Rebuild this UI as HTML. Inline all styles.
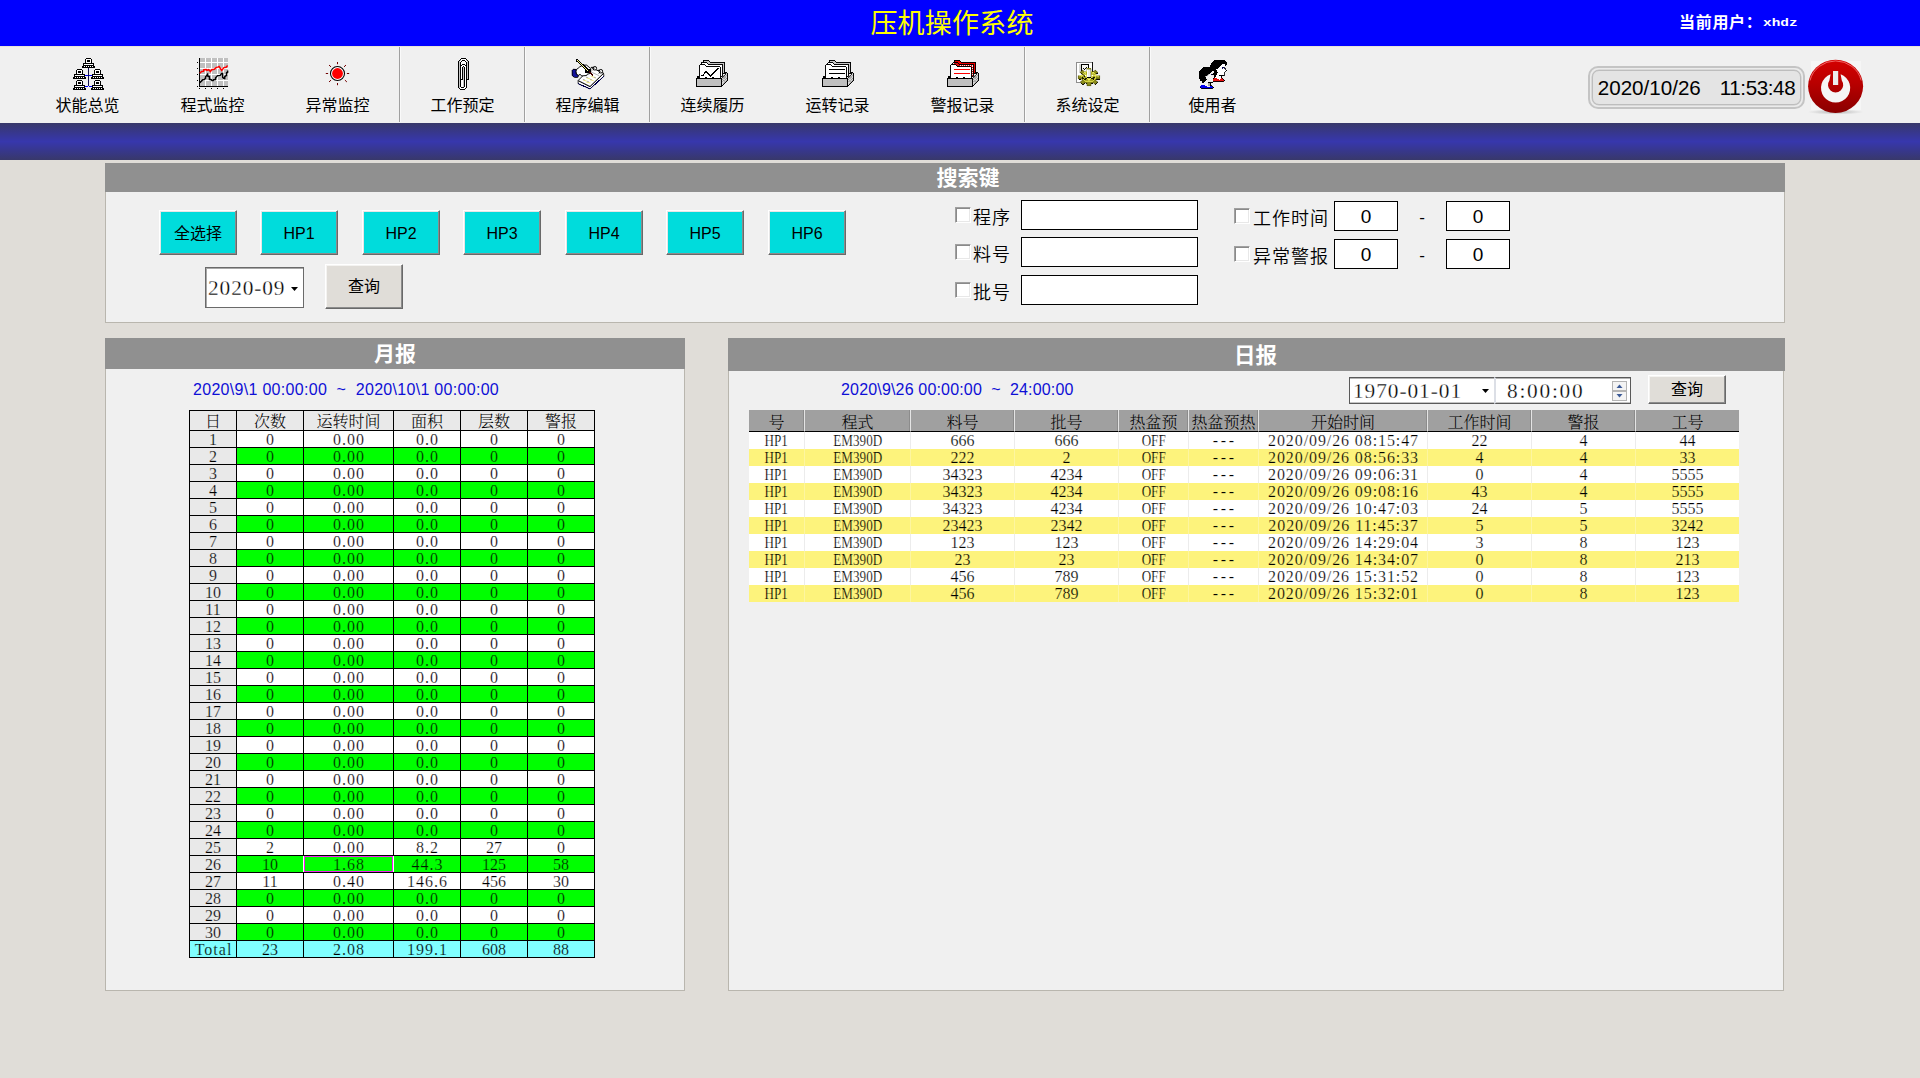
<!DOCTYPE html>
<html lang="zh-CN"><head><meta charset="utf-8"><title>压机操作系统</title>
<style>
*{box-sizing:border-box;margin:0;padding:0}
html,body{width:1920px;height:1078px;overflow:hidden}
body{position:relative;background:#e0ddd8;color:#000;font-family:"Liberation Sans","Noto Sans CJK SC",sans-serif;font-size:16px;line-height:1}
.a{position:absolute}
.song{font-family:"Liberation Serif","Noto Serif CJK SC",serif}
#titlebar{left:0;top:0;width:1920px;height:46px;background:#0000ff}
#apptitle{left:761px;top:5px;letter-spacing:.2px;width:382px;height:38px;line-height:39px;text-align:center;color:#ffff00;font-size:27px;white-space:nowrap}
#curuser{left:1679px;top:14px;height:20px;line-height:20px;color:#fff;font-weight:bold;font-size:16px;letter-spacing:.7px;white-space:nowrap;font-family:"Liberation Mono","Noto Sans CJK SC",monospace}
#toolbar{left:0;top:46px;width:1920px;height:77px;background:#f0f0f0;border-top:1px solid #e6e4dc}
.tb{top:0;width:125px;height:76px}
.tb svg{position:absolute;left:42px;top:7px;width:40px;height:40px}
.tb span{position:absolute;left:0;top:49px;width:125px;height:20px;line-height:20px;text-align:center;font-size:16px;white-space:nowrap}
.sep{top:0;width:2px;height:75px;border-left:1px solid #a0a0a0;border-right:1px solid #fafafa}
#band{left:0;top:123px;width:1920px;height:37px;background:linear-gradient(to bottom,#38386a 0%,#373790 28%,#3737ad 50%,#373790 72%,#38386a 100%)}
.panel{background:#f0f0f0;border:1px solid #b9b6ae}
.phead{left:0;top:0;background:#909090;color:#fff;font-weight:bold;text-align:center;white-space:nowrap}

.hp{top:46px;width:78px;height:45px;background:#00dcdc;border:1px solid;border-color:#fff #696969 #696969 #fff;box-shadow:inset -1px -1px 0 #8c8c8c,inset 1px 1px 0 #e6e6e6;text-align:center;line-height:45px;font-size:16px}
.btn{background:#e0ddd8;border:1px solid;border-color:#fff #696969 #696969 #fff;box-shadow:inset -1px -1px 0 #8c8c8c,inset 1px 1px 0 #f4f3f1;text-align:center;font-size:16px}
.cb{width:16px;height:16px;background:#fff;border:1px solid;border-color:#a0a0a0 #fff #fff #a0a0a0;box-shadow:inset 1px 1px 0 #8a8a8a,inset -1px -1px 0 #e8e8e8}
.lbl{font-size:18px;font-weight:350;letter-spacing:1px;height:22px;line-height:24px;white-space:nowrap}
.inp{background:#fff;border:1px solid #000;height:30px;text-align:center;font-size:19px;line-height:30px}

.dt{color:#0e0ed6;font-size:16px;letter-spacing:.3px;white-space:pre;height:20px;line-height:20px}
#mt{border-collapse:separate;border-spacing:1px;background:#000;table-layout:fixed;font-size:16px}
#mt td,#mt th{height:16px;line-height:15px;padding:1px 0 0;text-align:center;font-weight:normal;background:#fff;white-space:nowrap;overflow:hidden}
#mt th{height:19px;line-height:17px;padding-top:2px;background:#e9e9e9;font-weight:300}
#mt td.rh{background:#e9e9e9}
#mt tr.g td{background:#00ff00;color:#001c00}
#mt tr.g td.rh{background:#e9e9e9;color:#000}
#mt tr.t td{background:#80ffff}
#mt td.d{letter-spacing:1px;text-indent:1px}
#mt td{-webkit-text-stroke:.22px #fff}
#mt td.rh{-webkit-text-stroke-color:#e9e9e9}
#mt tr.g td{-webkit-text-stroke-color:#00ff00}
#mt tr.g td.rh{-webkit-text-stroke-color:#e9e9e9}
#mt tr.t td{-webkit-text-stroke-color:#80ffff}
#mt td.sel{box-shadow:-1px 0 0 #fff,1px 0 0 #fff,inset 0 0 0 1px #f020f0}

#dtb{border-collapse:separate;border-spacing:0;table-layout:fixed;font-size:16px;background:#fff}
#dtb td,#dtb th{height:17px;line-height:17px;padding:0;text-align:center;font-weight:normal;white-space:nowrap;overflow:hidden;border-right:1px solid #ececec}
#dtb th{height:21px;line-height:17px;padding-top:4px;font-weight:300;background:#a0a0a0;border-right:1px solid #e4e4e4;border-bottom:1px solid #000;box-shadow:inset -1px 0 0 #8c8c8c}
#dtb tr.y td{background:#fdf37c;border-right-color:#fdf5a0}
#dtb .c{display:inline-block;transform:scaleX(.82)}
#dtb .k{letter-spacing:2.7px;text-indent:2.7px}
#dtb .ts{letter-spacing:.9px;text-indent:1px;white-space:pre}
#dtb td{-webkit-text-stroke:.22px #fff}
#dtb tr.y td{-webkit-text-stroke-color:#fdf37c}
#dtb td:last-child,#dtb th:last-child{border-right:none;box-shadow:none}
</style></head><body>
<div id="titlebar" class="a"><div id="apptitle" class="a">压机操作系统</div><div id="curuser" class="a">当前用户：<span style="display:inline-block;font-size:10.6px;letter-spacing:0;transform:scaleX(1.36);transform-origin:0 50%;position:relative;top:-2px;margin-left:0">xhdz</span></div></div>
<div id="toolbar" class="a">
<div class="a tb" style="left:25px"><svg viewBox="0 0 40 40" shape-rendering="crispEdges"><path fill="#000" d="M19 4h5v1h-5zM18 5h1v1h-1zM24 5h1v1h-1zM18 6h1v1h-1zM20 6h3v1h-3zM24 6h1v1h-1zM18 7h1v1h-1zM20 7h3v1h-3zM24 7h1v1h-1zM18 8h1v1h-1zM24 8h1v1h-1zM16 9h11v1h-11zM16 10h1v1h-1zM26 10h1v1h-1zM16 11h11v1h-11zM15 12h2v1h-2zM18 12h1v1h-1zM20 12h1v1h-1zM22 12h1v1h-1zM24 12h1v1h-1zM26 12h2v1h-2zM15 13h13v1h-13z"/><path fill="#fff" d="M19 5h5v1h-5zM19 6h1v1h-1zM23 6h1v1h-1zM19 7h1v1h-1zM23 7h1v1h-1zM19 8h5v1h-5zM17 10h9v1h-9zM17 12h1v1h-1zM19 12h1v1h-1zM21 12h1v1h-1zM23 12h1v1h-1zM25 12h1v1h-1z"/><path fill="#000" d="M10 15h5v1h-5zM9 16h1v1h-1zM15 16h1v1h-1zM9 17h1v1h-1zM11 17h3v1h-3zM15 17h1v1h-1zM9 18h1v1h-1zM11 18h3v1h-3zM15 18h1v1h-1zM9 19h1v1h-1zM15 19h1v1h-1zM7 20h11v1h-11zM7 21h1v1h-1zM17 21h1v1h-1zM7 22h11v1h-11zM6 23h2v1h-2zM9 23h1v1h-1zM11 23h1v1h-1zM13 23h1v1h-1zM15 23h1v1h-1zM17 23h2v1h-2zM6 24h13v1h-13z"/><path fill="#fff" d="M10 16h5v1h-5zM10 17h1v1h-1zM14 17h1v1h-1zM10 18h1v1h-1zM14 18h1v1h-1zM10 19h5v1h-5zM8 21h9v1h-9zM8 23h1v1h-1zM10 23h1v1h-1zM12 23h1v1h-1zM14 23h1v1h-1zM16 23h1v1h-1z"/><path fill="#000" d="M28 15h5v1h-5zM27 16h1v1h-1zM33 16h1v1h-1zM27 17h1v1h-1zM29 17h3v1h-3zM33 17h1v1h-1zM27 18h1v1h-1zM29 18h3v1h-3zM33 18h1v1h-1zM27 19h1v1h-1zM33 19h1v1h-1zM25 20h11v1h-11zM25 21h1v1h-1zM35 21h1v1h-1zM25 22h11v1h-11zM24 23h2v1h-2zM27 23h1v1h-1zM29 23h1v1h-1zM31 23h1v1h-1zM33 23h1v1h-1zM35 23h2v1h-2zM24 24h13v1h-13z"/><path fill="#fff" d="M28 16h5v1h-5zM28 17h1v1h-1zM32 17h1v1h-1zM28 18h1v1h-1zM32 18h1v1h-1zM28 19h5v1h-5zM26 21h9v1h-9zM26 23h1v1h-1zM28 23h1v1h-1zM30 23h1v1h-1zM32 23h1v1h-1zM34 23h1v1h-1z"/><path fill="#000" d="M10 26h5v1h-5zM9 27h1v1h-1zM15 27h1v1h-1zM9 28h1v1h-1zM11 28h3v1h-3zM15 28h1v1h-1zM9 29h1v1h-1zM11 29h3v1h-3zM15 29h1v1h-1zM9 30h1v1h-1zM15 30h1v1h-1zM7 31h11v1h-11zM7 32h1v1h-1zM17 32h1v1h-1zM7 33h11v1h-11zM6 34h2v1h-2zM9 34h1v1h-1zM11 34h1v1h-1zM13 34h1v1h-1zM15 34h1v1h-1zM17 34h2v1h-2zM6 35h13v1h-13z"/><path fill="#fff" d="M10 27h5v1h-5zM10 28h1v1h-1zM14 28h1v1h-1zM10 29h1v1h-1zM14 29h1v1h-1zM10 30h5v1h-5zM8 32h9v1h-9zM8 34h1v1h-1zM10 34h1v1h-1zM12 34h1v1h-1zM14 34h1v1h-1zM16 34h1v1h-1z"/><path fill="#000" d="M28 26h5v1h-5zM27 27h1v1h-1zM33 27h1v1h-1zM27 28h1v1h-1zM29 28h3v1h-3zM33 28h1v1h-1zM27 29h1v1h-1zM29 29h3v1h-3zM33 29h1v1h-1zM27 30h1v1h-1zM33 30h1v1h-1zM25 31h11v1h-11zM25 32h1v1h-1zM35 32h1v1h-1zM25 33h11v1h-11zM24 34h2v1h-2zM27 34h1v1h-1zM29 34h1v1h-1zM31 34h1v1h-1zM33 34h1v1h-1zM35 34h2v1h-2zM24 35h13v1h-13z"/><path fill="#fff" d="M28 27h5v1h-5zM28 28h1v1h-1zM32 28h1v1h-1zM28 29h1v1h-1zM32 29h1v1h-1zM28 30h5v1h-5zM26 32h9v1h-9zM26 34h1v1h-1zM28 34h1v1h-1zM30 34h1v1h-1zM32 34h1v1h-1zM34 34h1v1h-1z"/><path fill="#10104c" d="M21 14h1v18h-1z"/><path fill="#0000f0" d="M18 21h3v1h-3zM22 21h3v1h-3zM18 32h3v1h-3zM22 32h3v1h-3z"/></svg><span>状能总览</span></div>
<div class="a tb" style="left:150px"><svg viewBox="0 0 40 40" shape-rendering="crispEdges"><path fill="#fff" d="M8 4h28v28h-28z"/><path fill="#c0c0c0" d="M8 4h5v4h-5zM8 9h5v5h-5zM8 15h5v5h-5zM8 21h5v5h-5zM8 27h5v5h-5zM14 4h5v4h-5zM14 9h5v5h-5zM14 15h5v5h-5zM14 21h5v5h-5zM14 27h5v5h-5zM20 4h5v4h-5zM20 9h5v5h-5zM20 15h5v5h-5zM20 21h5v5h-5zM20 27h5v5h-5zM26 4h5v4h-5zM26 9h5v5h-5zM26 15h5v5h-5zM26 21h5v5h-5zM26 27h5v5h-5zM32 4h4v4h-4zM32 9h4v5h-4zM32 15h4v5h-4zM32 21h4v5h-4zM32 27h4v5h-4z"/><path fill="#000" d="M7 4h1v28h28v1h-29zM5 8h1v1h-1zM5 14h1v1h-1zM5 20h1v1h-1zM5 26h1v1h-1zM5 32h1v1h-1zM7 34h1v1h-1zM13 34h1v1h-1zM19 34h1v1h-1zM25 34h1v1h-1zM31 34h1v1h-1z"/><polyline shape-rendering="auto" fill="none" stroke="#f00" stroke-width="1.5" points="7.8,19.3 9.6,17.5 11.5,17.3 11.8,15.7 14.3,15.5 14.9,16.4 16.7,15.7 18.4,17.5 19.7,15.7 22.3,15.3 24.1,13.6 26.3,12.9 27.1,12.5 29.7,16.4 31.9,13.6 34.1,13.3 35.6,11.6"/><polyline shape-rendering="auto" fill="none" stroke="#000" stroke-width="1.5" points="7.8,28.6 10.8,25.7 12.4,25.5 13.5,24.4 13.6,22.7 15.6,20.3 16,22.3 17.4,22.5 17.5,25.3 19.3,25.7 19.9,26.6 21.2,26.6 21.7,25.7 23.4,25.5 23.6,23.8 25.6,21.6 28.2,21.4 29.7,19.4 30.6,19.4 30.7,23.3 31.9,24.4 32.7,24.4 32.8,22.7 34.5,21.3 34.6,18.7 35.6,18.3 35.6,16.4"/></svg><span>程式监控</span></div>
<div class="a tb" style="left:275px"><svg viewBox="0 0 40 40" shape-rendering="crispEdges"><g shape-rendering="auto"><circle cx="20.5" cy="19.5" r="7" fill="#fff" stroke="#000" stroke-width="1.1"/><circle cx="20.5" cy="19.5" r="5.4" fill="#f00"/><path stroke="#700000" stroke-width="1" fill="none" d="M20.5 8v2.2M20.5 29v2.2M8.8 19.5h2.3M29.9 19.5h2.3M12 11l2 1.9M29 11l-2 1.9M12 28l2 -1.9M29.9 28l-2 -1.9"/></g></svg><span>异常监控</span></div>
<div class="a tb" style="left:400px"><svg viewBox="0 0 40 40" shape-rendering="crispEdges"><path fill="#000" d="M19 4h5v1h-5zM18 5h1v1h-1zM24 5h1v1h-1zM17 6h1v1h-1zM20 6h3v1h-3zM25 6h1v1h-1zM16 7h1v1h-1zM19 7h1v1h-1zM23 7h1v1h-1zM26 7h1v1h-1zM16 8h1v1h-1zM18 8h1v1h-1zM24 8h1v1h-1zM26 8h1v1h-1zM16 9h1v1h-1zM18 9h1v1h-1zM24 9h1v1h-1zM26 9h1v1h-1zM16 10h1v1h-1zM18 10h1v1h-1zM20 10h3v1h-3zM24 10h1v1h-1zM26 10h1v1h-1zM16 11h1v1h-1zM18 11h2v1h-2zM23 11h2v1h-2zM26 11h1v1h-1zM16 12h1v1h-1zM18 12h1v1h-1zM21 12h1v1h-1zM24 12h1v1h-1zM26 12h1v1h-1zM16 13h1v1h-1zM18 13h1v1h-1zM20 13h1v1h-1zM22 13h1v1h-1zM24 13h1v1h-1zM26 13h1v1h-1zM16 14h1v1h-1zM18 14h1v1h-1zM20 14h1v1h-1zM22 14h1v1h-1zM24 14h1v1h-1zM26 14h1v1h-1zM16 15h1v1h-1zM18 15h1v1h-1zM20 15h1v1h-1zM22 15h1v1h-1zM24 15h1v1h-1zM26 15h1v1h-1zM16 16h1v1h-1zM18 16h1v1h-1zM20 16h1v1h-1zM22 16h1v1h-1zM24 16h1v1h-1zM26 16h1v1h-1zM16 17h1v1h-1zM18 17h1v1h-1zM20 17h1v1h-1zM22 17h1v1h-1zM24 17h1v1h-1zM26 17h1v1h-1zM16 18h1v1h-1zM18 18h1v1h-1zM20 18h1v1h-1zM22 18h1v1h-1zM24 18h1v1h-1zM26 18h1v1h-1zM16 19h1v1h-1zM18 19h1v1h-1zM20 19h1v1h-1zM22 19h1v1h-1zM24 19h1v1h-1zM26 19h1v1h-1zM16 20h1v1h-1zM18 20h1v1h-1zM20 20h1v1h-1zM22 20h1v1h-1zM24 20h1v1h-1zM26 20h1v1h-1zM16 21h1v1h-1zM18 21h1v1h-1zM20 21h1v1h-1zM22 21h1v1h-1zM24 21h1v1h-1zM26 21h1v1h-1zM16 22h1v1h-1zM18 22h1v1h-1zM20 22h1v1h-1zM22 22h1v1h-1zM24 22h1v1h-1zM26 22h1v1h-1zM16 23h1v1h-1zM18 23h1v1h-1zM20 23h1v1h-1zM22 23h1v1h-1zM24 23h1v1h-1zM26 23h1v1h-1zM16 24h1v1h-1zM18 24h1v1h-1zM20 24h1v1h-1zM22 24h1v1h-1zM24 24h1v1h-1zM26 24h1v1h-1zM16 25h1v1h-1zM18 25h3v1h-3zM22 25h1v1h-1zM24 25h3v1h-3zM16 26h1v1h-1zM18 26h1v1h-1zM22 26h1v1h-1zM24 26h1v1h-1zM16 27h1v1h-1zM18 27h1v1h-1zM22 27h1v1h-1zM24 27h1v1h-1zM16 28h1v1h-1zM18 28h1v1h-1zM22 28h1v1h-1zM24 28h1v1h-1zM16 29h1v1h-1zM18 29h1v1h-1zM22 29h1v1h-1zM24 29h1v1h-1zM16 30h1v1h-1zM18 30h1v1h-1zM22 30h1v1h-1zM24 30h1v1h-1zM16 31h1v1h-1zM18 31h1v1h-1zM22 31h1v1h-1zM24 31h1v1h-1zM16 32h1v1h-1zM18 32h1v1h-1zM22 32h1v1h-1zM24 32h1v1h-1zM16 33h1v1h-1zM19 33h3v1h-3zM24 33h1v1h-1zM17 34h1v1h-1zM23 34h1v1h-1zM18 35h5v1h-5z"/><path fill="#fff" d="M19 5h5v1h-5zM19 6h1v1h-1zM23 6h1v1h-1zM18 7h1v1h-1zM20 7h3v1h-3zM24 7h1v1h-1zM19 8h5v1h-5zM19 9h5v1h-5zM19 10h1v1h-1zM23 10h1v1h-1zM20 11h3v1h-3zM19 12h2v1h-2zM22 12h2v1h-2zM19 13h1v1h-1zM23 13h1v1h-1zM19 14h1v1h-1zM23 14h1v1h-1zM19 15h1v1h-1zM23 15h1v1h-1zM19 16h1v1h-1zM23 16h1v1h-1zM19 17h1v1h-1zM23 17h1v1h-1zM19 18h1v1h-1zM23 18h1v1h-1zM19 19h1v1h-1zM23 19h1v1h-1zM19 20h1v1h-1zM23 20h1v1h-1zM19 21h1v1h-1zM23 21h1v1h-1zM19 22h1v1h-1zM23 22h1v1h-1zM19 23h1v1h-1zM23 23h1v1h-1zM19 24h1v1h-1zM23 24h1v1h-1zM23 25h1v1h-1zM19 26h2v1h-2zM23 26h1v1h-1zM19 27h2v1h-2zM23 27h1v1h-1zM19 28h2v1h-2zM23 28h1v1h-1zM19 29h2v1h-2zM23 29h1v1h-1zM19 30h2v1h-2zM23 30h1v1h-1zM19 31h2v1h-2zM23 31h1v1h-1zM19 32h2v1h-2zM23 32h1v1h-1zM18 33h1v1h-1zM22 33h2v1h-2zM18 34h5v1h-5z"/><path fill="#c8c8c8" d="M18 6h1v1h-1zM24 6h1v1h-1zM17 7h1v1h-1zM25 7h1v1h-1zM17 8h1v1h-1zM25 8h1v1h-1zM17 9h1v1h-1zM25 9h1v1h-1zM17 10h1v1h-1zM25 10h1v1h-1zM17 11h1v1h-1zM25 11h1v1h-1zM17 12h1v1h-1zM25 12h1v1h-1zM17 13h1v1h-1zM21 13h1v1h-1zM25 13h1v1h-1zM17 14h1v1h-1zM21 14h1v1h-1zM25 14h1v1h-1zM17 15h1v1h-1zM21 15h1v1h-1zM25 15h1v1h-1zM17 16h1v1h-1zM21 16h1v1h-1zM25 16h1v1h-1zM17 17h1v1h-1zM21 17h1v1h-1zM25 17h1v1h-1zM17 18h1v1h-1zM21 18h1v1h-1zM25 18h1v1h-1zM17 19h1v1h-1zM21 19h1v1h-1zM25 19h1v1h-1zM17 20h1v1h-1zM21 20h1v1h-1zM25 20h1v1h-1zM17 21h1v1h-1zM21 21h1v1h-1zM25 21h1v1h-1zM17 22h1v1h-1zM21 22h1v1h-1zM25 22h1v1h-1zM17 23h1v1h-1zM21 23h1v1h-1zM25 23h1v1h-1zM17 24h1v1h-1zM21 24h1v1h-1zM25 24h1v1h-1zM17 25h1v1h-1zM21 25h1v1h-1zM17 26h1v1h-1zM21 26h1v1h-1zM17 27h1v1h-1zM21 27h1v1h-1zM17 28h1v1h-1zM21 28h1v1h-1zM17 29h1v1h-1zM21 29h1v1h-1zM17 30h1v1h-1zM21 30h1v1h-1zM17 31h1v1h-1zM21 31h1v1h-1zM17 32h1v1h-1zM21 32h1v1h-1zM17 33h1v1h-1z"/></svg><span>工作预定</span></div>
<div class="a tb" style="left:525px"><svg viewBox="0 0 1078 1078" shape-rendering="crispEdges"><g stroke-linejoin="round"><polygon points="300,715 300,800 620,940 995,600 985,520 620,880" fill="#fff" stroke="#000" stroke-width="22"/><polyline points="300,800 620,940 995,600" fill="none" stroke="#00004c" stroke-width="28"/><polygon points="300,715 620,875 985,520 650,365" fill="#fff" stroke="#000" stroke-width="24"/><path d="M520,640l100,30M430,700l100,30M620,690l100,30M520,760l110,20M640,590l130,60" stroke="#e8e060" stroke-width="22" fill="none"/><path d="M510,625l60,12M430,685l50,12M620,680l50,12M540,735l50,12M670,495l200,90M730,625l50,15" stroke="#9a9a9a" stroke-width="20" fill="none"/><circle cx="750" cy="385" r="48" fill="#fff" stroke="#000" stroke-width="26"/><circle cx="912" cy="465" r="48" fill="#fff" stroke="#000" stroke-width="26"/><path d="M655,360h80M700,440l30,-60M820,440h70M860,525l35,-60" stroke="#000" stroke-width="26" fill="none"/><polygon points="250,420 300,385 345,345 395,318 450,300 530,300 640,395 640,520 545,545 530,580 400,590 350,548 300,580 250,540 238,470" fill="#fff" stroke="#000" stroke-width="26"/><polygon points="490,390 640,400 640,510 490,500" fill="#000"/><polygon points="140,440 168,412 250,418 238,470 250,540 312,582 290,632 200,632 140,580" fill="#14149a" stroke="#000" stroke-width="24"/><path d="M262,160L600,472" stroke="#000" stroke-width="70" stroke-linecap="round" fill="none"/><path d="M272,170L590,462" stroke="#ffff90" stroke-width="27" stroke-dasharray="24 14" fill="none"/><path d="M600,472L700,575" stroke="#400000" stroke-width="30" fill="none"/></g></svg><span>程序编辑</span></div>
<div class="a tb" style="left:650px"><svg viewBox="0 0 1078 1078" shape-rendering="crispEdges"><g transform="translate(0,0)" stroke-linejoin="miter"><polygon points="305,240 305,172 450,172 492,228 880,228 880,520 305,520" fill="#c8c8c8" stroke="#000" stroke-width="26"/><polygon points="255,295 255,232 395,232 440,288 822,288 822,600 255,600" fill="#fff" stroke="#000" stroke-width="26"/><path d="M275,255h60M460,312h340M796,330v240" stroke="#fff" stroke-width="24" stroke-dasharray="30 24" fill="none"/><polygon points="792,668 905,560 905,498 935,498 962,528 962,716 822,862 792,862" fill="#d8d8d8" stroke="#000" stroke-width="26"/><path d="M800,640l140,-120M810,700l130,-120M815,760l130,-125M820,820l125,-125M830,560l110,110M810,600l130,130M805,660l90,90" stroke="#7a7a7a" stroke-width="12" fill="none"/><polygon points="205,660 205,288 342,288 388,342 767,342 767,660" fill="#fff" stroke="#000" stroke-width="26"/><polyline points="248,578 288,590 375,465 500,602 705,385" fill="none" stroke="#000" stroke-width="34" stroke-linejoin="round" stroke-linecap="round"/><path d="M345,660l18,-34h34l18,34zM535,660l18,-34h34l18,34z" fill="#000"/><path d="M140,640l50,-45" stroke="#000" stroke-width="40" fill="none"/><rect x="122" y="668" width="670" height="208" rx="14" fill="#c0c0c0" stroke="#000" stroke-width="28"/></g></svg><span>连续履历</span></div>
<div class="a tb" style="left:775px"><svg viewBox="0 0 1078 1078" shape-rendering="crispEdges"><g transform="translate(28,0)" stroke-linejoin="miter"><polygon points="305,240 305,172 450,172 492,228 880,228 880,520 305,520" fill="#c8c8c8" stroke="#000" stroke-width="26"/><polygon points="255,295 255,232 395,232 440,288 822,288 822,600 255,600" fill="#fff" stroke="#000" stroke-width="26"/><path d="M275,255h60M460,312h340M796,330v240" stroke="#fff" stroke-width="24" stroke-dasharray="30 24" fill="none"/><polygon points="792,668 905,560 905,498 935,498 962,528 962,716 822,862 792,862" fill="#d8d8d8" stroke="#000" stroke-width="26"/><path d="M800,640l140,-120M810,700l130,-120M815,760l130,-125M820,820l125,-125M830,560l110,110M810,600l130,130M805,660l90,90" stroke="#7a7a7a" stroke-width="12" fill="none"/><polygon points="205,660 205,288 342,288 388,342 767,342 767,660" fill="#fff" stroke="#000" stroke-width="26"/><path d="M300,416h425M300,526h425" stroke="#000" stroke-width="30" stroke-linecap="round" fill="none"/><path d="M345,660l18,-34h34l18,34zM535,660l18,-34h34l18,34z" fill="#000"/><path d="M140,640l50,-45" stroke="#000" stroke-width="40" fill="none"/><rect x="122" y="668" width="670" height="208" rx="14" fill="#c0c0c0" stroke="#000" stroke-width="28"/></g></svg><span>运转记录</span></div>
<div class="a tb" style="left:900px"><svg viewBox="0 0 1078 1078" shape-rendering="crispEdges"><g transform="translate(28,0)" stroke-linejoin="miter"><polygon points="305,240 305,172 450,172 492,228 880,228 880,520 305,520" fill="#f00000" stroke="#000" stroke-width="26"/><polygon points="255,295 255,232 395,232 440,288 822,288 822,600 255,600" fill="#d01010" stroke="#000" stroke-width="26"/><path d="M275,255h60M460,312h340M796,330v240" stroke="#fff" stroke-width="24" stroke-dasharray="30 24" fill="none"/><polygon points="792,668 905,560 905,498 935,498 962,528 962,716 822,862 792,862" fill="#d8d8d8" stroke="#000" stroke-width="26"/><path d="M800,640l140,-120M810,700l130,-120M815,760l130,-125M820,820l125,-125M830,560l110,110M810,600l130,130M805,660l90,90" stroke="#7a7a7a" stroke-width="12" fill="none"/><polygon points="205,660 205,288 342,288 388,342 767,342 767,660" fill="#fff" stroke="#000" stroke-width="26"/><path d="M300,416h425M300,526h425" stroke="#f00" stroke-width="30" stroke-linecap="round" fill="none"/><path d="M345,660l18,-34h34l18,34zM535,660l18,-34h34l18,34z" fill="#000"/><path d="M140,640l50,-45" stroke="#000" stroke-width="40" fill="none"/><rect x="122" y="668" width="670" height="208" rx="14" fill="#c0c0c0" stroke="#000" stroke-width="28"/></g></svg><span>警报记录</span></div>
<div class="a tb" style="left:1025px"><svg viewBox="0 0 1078 1078" shape-rendering="crispEdges"><rect x="252" y="222" width="430" height="545" fill="#fff" stroke="#8a8a8a" stroke-width="26"/><path d="M684,215v260" stroke="#101010" stroke-width="30"/><rect x="310" y="275" width="60" height="230" fill="#d8d8d4"/><rect x="388" y="292" width="190" height="240" fill="#f6f6f0" stroke="#000" stroke-width="30"/><path d="M435,385l35,35l60,-62" stroke="#000" stroke-width="26" fill="none"/><polygon points="537,397 647,397 642,463 701,482 756,433 834,495 772,538 796,585 879,581 879,669 796,665 772,712 834,755 756,817 701,768 642,787 647,853 537,853 542,787 483,768 428,817 350,755 412,712 388,665 305,669 305,581 388,585 412,538 350,495 428,433 483,482 542,463" transform="translate(10,22)" fill="#000"/><polygon points="537,397 647,397 642,463 701,482 756,433 834,495 772,538 796,585 879,581 879,669 796,665 772,712 834,755 756,817 701,768 642,787 647,853 537,853 542,787 483,768 428,817 350,755 412,712 388,665 305,669 305,581 388,585 412,538 350,495 428,433 483,482 542,463" fill="#8c8c1c" stroke="#4a4a08" stroke-width="14" stroke-linejoin="round"/><ellipse cx="592" cy="610" rx="190" ry="140" fill="#a4a424" stroke="#d8d844" stroke-width="26"/><path d="M420,540l70,60M700,560l-40,50M470,690l60,-30M720,680l-60,-30M400,640l60,20M760,620l-50,30" stroke="#1a1a00" stroke-width="34" fill="none"/><path d="M330,590l150,-30l112,150l118,-140l150,30M470,480l122,230l128,-220" stroke="#f4f468" stroke-width="24" fill="none" stroke-linejoin="round"/><ellipse cx="592" cy="622" rx="70" ry="30" fill="#000"/><rect x="532" y="400" width="118" height="215" fill="#ecece6"/><rect x="532" y="400" width="34" height="215" fill="#fff"/><rect x="622" y="400" width="28" height="215" fill="#b4b4a8"/><ellipse cx="591" cy="398" rx="60" ry="20" fill="#a8a820" stroke="#6a6a10" stroke-width="10"/><circle cx="498" cy="580" r="16" fill="#fff"/><circle cx="688" cy="580" r="16" fill="#fff"/></svg><span>系统设定</span></div>
<div class="a tb" style="left:1150px"><svg viewBox="0 0 1078 1078" shape-rendering="crispEdges"><polygon points="620,165 860,165 905,192 945,238 940,292 888,332 884,272 832,272 722,380 652,422 702,500 620,640 560,700 480,520 480,350 520,250 572,196" fill="#000"/><polygon points="832,272 884,272 890,332 872,360 920,400 906,420 942,446 882,476 890,560 852,590 800,592 800,650 742,690 640,648 620,630 702,500 652,422 722,380" fill="#fff"/><path d="M812,358h44l16,34M816,358l10,36" stroke="#000050" stroke-width="24" fill="none"/><path d="M872,360l48,40l-14,20l36,26l-60,30l8,84l-38,30" stroke="#000" stroke-width="22" fill="none"/><path d="M728,578h134M790,590v62" stroke="#000" stroke-width="28" fill="none"/><polygon points="572,662 642,650 742,692 812,650 892,716 832,748 572,748" fill="#e81010"/><path d="M572,742h262l58,-28l-80,-64" stroke="#000" stroke-width="24" fill="none"/><polygon points="330,350 486,350 520,470 592,470 420,582 352,612 412,690 352,750 332,792 282,792 270,750 216,712 190,662 190,490 220,440 272,380" fill="#000"/><polygon points="540,462 596,470 592,512 542,550 592,580 602,640 572,662 572,752 502,762 502,832 452,884 300,792 352,750 412,690 352,612 420,582" fill="#ececec"/><path d="M360,612l200,120M400,580l170,110M440,545l130,90M330,770l140,100M380,720l110,80" stroke="#fff" stroke-width="16" fill="none"/><path d="M512,548l34,30" stroke="#000050" stroke-width="26" fill="none"/><path d="M440,768h128M492,780v70" stroke="#000" stroke-width="28" fill="none"/><rect x="440" y="782" width="40" height="70" fill="#a8a8a8"/><polygon points="216,882 262,832 302,832 442,892 522,860 592,906 532,940 302,940 216,912" fill="#0000f0"/><path d="M216,910l86,30h230l60,-34l-70,-46" stroke="#000" stroke-width="24" fill="none"/></svg><span>使用者</span></div>
<div class="a sep" style="left:399px"></div>
<div class="a sep" style="left:524px"></div>
<div class="a sep" style="left:649px"></div>
<div class="a sep" style="left:1024px"></div>
<div class="a sep" style="left:1149px"></div>
<div class="a" id="clockbox" style="left:1588px;top:19px;width:217px;height:43px;border:2px solid #c4c4c4;border-radius:10px;background:#ebebeb"></div>
<div class="a" id="clock" style="left:1592px;top:23px;width:209px;height:35px;border:1px solid #bdbdbd;box-shadow:0 0 0 .5px #c8c8c8;border-radius:7px;background:#e4e4e4;line-height:34px;text-align:center;font-size:20.6px;word-spacing:.6px;white-space:pre">2020/10/26   <span style="letter-spacing:-.4px">11:53:48</span></div>
<svg class="a" style="left:1806px;top:12px" width="60" height="58" viewBox="0 0 60 58"><defs><linearGradient id="pg" x1="0" y1="0" x2="0" y2="1"><stop offset="0" stop-color="#d40000"/><stop offset=".45" stop-color="#b80000"/><stop offset="1" stop-color="#8a0000"/></linearGradient><radialGradient id="ps" cx=".5" cy=".5" r=".5"><stop offset="0" stop-color="#b8b8b8"/><stop offset="1" stop-color="#b8b8b8" stop-opacity="0"/></radialGradient></defs><rect x="5" y="2" width="50" height="49" fill="#f6f6f6"/><ellipse cx="29.6" cy="53" rx="28" ry="2.6" fill="url(#ps)"/><ellipse cx="29.6" cy="27.3" rx="27.5" ry="26.6" fill="url(#pg)"/><path d="M4 21.500A26.300 25.400 0 0 1 55.200 21.500" fill="none" stroke="#ff9090" stroke-opacity=".7" stroke-width="1"/><path fill="#f6f6f6" d="M24.6 15.200A14.600 14.600 0 1 0 34.600 15.200L35.800 21.500A7.600 7.600 0 1 1 23.400 21.500z"/><rect x="27" y="12" width="5.200" height="14" fill="#ececec"/></svg>
</div>
<div id="band" class="a"></div>
<div id="search" class="a panel" style="left:105px;top:163px;width:1680px;height:160px">
<div class="a phead" style="left:-1px;top:-1px;width:1680px;height:29px;line-height:30px;font-size:21px;text-indent:46px">搜索键</div>
<div class="a hp" style="left:53px">全选择</div>
<div class="a hp" style="left:154px">HP1</div>
<div class="a hp" style="left:256px">HP2</div>
<div class="a hp" style="left:357px">HP3</div>
<div class="a hp" style="left:459px">HP4</div>
<div class="a hp" style="left:560px">HP5</div>
<div class="a hp" style="left:662px">HP6</div>
<div class="a song" style="left:99px;top:103px;width:99px;height:41px;background:#fff;border:1px solid #6a6a6a;box-shadow:inset 1px 1px 0 #a8a8a8;letter-spacing:.9px;-webkit-text-stroke:.3px #fff;font-size:21.33px;line-height:40px;padding-left:2px;white-space:nowrap">2020-09<svg class="a" style="left:85px;top:19px" width="7" height="4" viewBox="0 0 7 4"><path d="M0 0h7L3.500 4z" fill="#000"/></svg></div>
<div class="a btn" style="left:219px;top:100px;width:78px;height:45px;line-height:44px">查询</div>
<div class="a cb" style="left:849px;top:43px"></div>
<div class="a lbl" style="left:867px;top:42px">程序</div>
<div class="a inp" style="left:915px;top:36px;width:177px"></div>
<div class="a cb" style="left:849px;top:80px"></div>
<div class="a lbl" style="left:867px;top:79px">料号</div>
<div class="a inp" style="left:915px;top:73px;width:177px"></div>
<div class="a cb" style="left:849px;top:118px"></div>
<div class="a lbl" style="left:867px;top:117px">批号</div>
<div class="a inp" style="left:915px;top:111px;width:177px"></div>
<div class="a cb" style="left:1128px;top:44px"></div>
<div class="a lbl" style="left:1147px;top:43px">工作时间</div>
<div class="a inp" style="left:1228px;top:37px;width:64px">0</div>
<div class="a" style="left:1308px;top:39px;width:16px;text-align:center;font-size:17px;line-height:30px">-</div>
<div class="a inp" style="left:1340px;top:37px;width:64px">0</div>
<div class="a cb" style="left:1128px;top:82px"></div>
<div class="a lbl" style="left:1147px;top:81px">异常警报</div>
<div class="a inp" style="left:1228px;top:75px;width:64px">0</div>
<div class="a" style="left:1308px;top:77px;width:16px;text-align:center;font-size:17px;line-height:30px">-</div>
<div class="a inp" style="left:1340px;top:75px;width:64px">0</div>
</div>
<div id="monthly" class="a panel" style="left:105px;top:338px;width:580px;height:653px">
<div class="a phead" style="left:-1px;top:-1px;width:580px;height:31px;line-height:32px;font-size:21px">月报</div>
<div class="a dt" style="left:87px;top:41px">2020\9\1 00:00:00  ~  2020\10\1 00:00:00</div>
<table id="mt" class="a song" style="left:83px;top:71px"><colgroup><col style="width:46px"><col style="width:66px"><col style="width:89px"><col style="width:66px"><col style="width:66px"><col style="width:66px"></colgroup>
<tr><th>日</th><th>次数</th><th>运转时间</th><th>面积</th><th>层数</th><th>警报</th></tr>
<tr><td class="rh">1</td><td>0</td><td class="d">0.00</td><td class="d">0.0</td><td>0</td><td>0</td></tr>
<tr class="g"><td class="rh">2</td><td>0</td><td class="d">0.00</td><td class="d">0.0</td><td>0</td><td>0</td></tr>
<tr><td class="rh">3</td><td>0</td><td class="d">0.00</td><td class="d">0.0</td><td>0</td><td>0</td></tr>
<tr class="g"><td class="rh">4</td><td>0</td><td class="d">0.00</td><td class="d">0.0</td><td>0</td><td>0</td></tr>
<tr><td class="rh">5</td><td>0</td><td class="d">0.00</td><td class="d">0.0</td><td>0</td><td>0</td></tr>
<tr class="g"><td class="rh">6</td><td>0</td><td class="d">0.00</td><td class="d">0.0</td><td>0</td><td>0</td></tr>
<tr><td class="rh">7</td><td>0</td><td class="d">0.00</td><td class="d">0.0</td><td>0</td><td>0</td></tr>
<tr class="g"><td class="rh">8</td><td>0</td><td class="d">0.00</td><td class="d">0.0</td><td>0</td><td>0</td></tr>
<tr><td class="rh">9</td><td>0</td><td class="d">0.00</td><td class="d">0.0</td><td>0</td><td>0</td></tr>
<tr class="g"><td class="rh">10</td><td>0</td><td class="d">0.00</td><td class="d">0.0</td><td>0</td><td>0</td></tr>
<tr><td class="rh">11</td><td>0</td><td class="d">0.00</td><td class="d">0.0</td><td>0</td><td>0</td></tr>
<tr class="g"><td class="rh">12</td><td>0</td><td class="d">0.00</td><td class="d">0.0</td><td>0</td><td>0</td></tr>
<tr><td class="rh">13</td><td>0</td><td class="d">0.00</td><td class="d">0.0</td><td>0</td><td>0</td></tr>
<tr class="g"><td class="rh">14</td><td>0</td><td class="d">0.00</td><td class="d">0.0</td><td>0</td><td>0</td></tr>
<tr><td class="rh">15</td><td>0</td><td class="d">0.00</td><td class="d">0.0</td><td>0</td><td>0</td></tr>
<tr class="g"><td class="rh">16</td><td>0</td><td class="d">0.00</td><td class="d">0.0</td><td>0</td><td>0</td></tr>
<tr><td class="rh">17</td><td>0</td><td class="d">0.00</td><td class="d">0.0</td><td>0</td><td>0</td></tr>
<tr class="g"><td class="rh">18</td><td>0</td><td class="d">0.00</td><td class="d">0.0</td><td>0</td><td>0</td></tr>
<tr><td class="rh">19</td><td>0</td><td class="d">0.00</td><td class="d">0.0</td><td>0</td><td>0</td></tr>
<tr class="g"><td class="rh">20</td><td>0</td><td class="d">0.00</td><td class="d">0.0</td><td>0</td><td>0</td></tr>
<tr><td class="rh">21</td><td>0</td><td class="d">0.00</td><td class="d">0.0</td><td>0</td><td>0</td></tr>
<tr class="g"><td class="rh">22</td><td>0</td><td class="d">0.00</td><td class="d">0.0</td><td>0</td><td>0</td></tr>
<tr><td class="rh">23</td><td>0</td><td class="d">0.00</td><td class="d">0.0</td><td>0</td><td>0</td></tr>
<tr class="g"><td class="rh">24</td><td>0</td><td class="d">0.00</td><td class="d">0.0</td><td>0</td><td>0</td></tr>
<tr><td class="rh">25</td><td>2</td><td class="d">0.00</td><td class="d">8.2</td><td>27</td><td>0</td></tr>
<tr class="g"><td class="rh">26</td><td>10</td><td class="d sel">1.68</td><td class="d">44.3</td><td>125</td><td>58</td></tr>
<tr><td class="rh">27</td><td>11</td><td class="d">0.40</td><td class="d">146.6</td><td>456</td><td>30</td></tr>
<tr class="g"><td class="rh">28</td><td>0</td><td class="d">0.00</td><td class="d">0.0</td><td>0</td><td>0</td></tr>
<tr><td class="rh">29</td><td>0</td><td class="d">0.00</td><td class="d">0.0</td><td>0</td><td>0</td></tr>
<tr class="g"><td class="rh">30</td><td>0</td><td class="d">0.00</td><td class="d">0.0</td><td>0</td><td>0</td></tr>
<tr class="t"><td class="d">Total</td><td>23</td><td class="d">2.08</td><td class="d">199.1</td><td>608</td><td>88</td></tr>
</table></div>
<div id="daily" class="a panel" style="left:728px;top:338px;width:1056px;height:653px">
<div class="a phead" style="left:-1px;top:-1px;width:1057px;height:33px;line-height:36px;font-size:21.5px;padding-right:2px">日报</div>
<div class="a dt" style="left:112px;top:41px;letter-spacing:.17px">2020\9\26 00:00:00  ~  24:00:00</div>
<div class="a song" style="left:620px;top:38px;width:146px;height:27px;background:#fff;border:1px solid #5a5a5a;border-right-color:#e4e4e4;box-shadow:inset 0 1px 0 #b4b4b4,inset 0 -1px 0 #c4c4c4;-webkit-text-stroke:.3px #fff;font-size:21.33px;line-height:26px;padding-left:3px;letter-spacing:.95px;white-space:nowrap">1970-01-01<svg class="a" style="left:132px;top:11px" width="7" height="4" viewBox="0 0 7 4"><path d="M0 0h7L3.500 4z" fill="#000"/></svg></div>
<div class="a song" style="left:765px;top:38px;width:137px;height:27px;background:#fff;border:1px solid #5a5a5a;border-left:2px solid #dcdfe6;box-shadow:inset 0 1px 0 #b4b4b4,inset 0 -1px 0 #c4c4c4;-webkit-text-stroke:.3px #fff;font-size:21.33px;line-height:26px;padding-left:11px;letter-spacing:1.75px;white-space:nowrap">8:00:00<svg class="a" style="left:116px;top:3px" width="15" height="20" viewBox="0 0 15 20"><rect x=".5" y=".5" width="14" height="9" fill="#f4f4f4" stroke="#b4b4b4"/><rect x=".5" y="10.5" width="14" height="9" fill="#f4f4f4" stroke="#b4b4b4"/><path d="M4.500 7h6L7.500 3.500z" fill="#3c5a96"/><path d="M4.500 13h6L7.500 16.500z" fill="#3c5a96"/></svg></div>
<div class="a btn" style="left:919px;top:36px;width:78px;height:29px;line-height:28px">查询</div>
<table id="dtb" class="a song" style="left:20px;top:71px"><colgroup><col style="width:56px"><col style="width:106px"><col style="width:104px"><col style="width:104px"><col style="width:70px"><col style="width:70px"><col style="width:169px"><col style="width:104px"><col style="width:104px"><col style="width:103px"></colgroup>
<tr><th>号</th><th>程式</th><th>料号</th><th>批号</th><th>热盆预</th><th>热盆预热</th><th>开始时间</th><th>工作时间</th><th>警报</th><th>工号</th></tr>
<tr><td><span class="c">HP1</span></td><td><span class="c">EM390D</span></td><td>666</td><td>666</td><td><span class="c">OFF</span></td><td class="k">---</td><td class="ts">2020/09/26 08:15:47</td><td>22</td><td>4</td><td>44</td></tr>
<tr class="y"><td><span class="c">HP1</span></td><td><span class="c">EM390D</span></td><td>222</td><td>2</td><td><span class="c">OFF</span></td><td class="k">---</td><td class="ts">2020/09/26 08:56:33</td><td>4</td><td>4</td><td>33</td></tr>
<tr><td><span class="c">HP1</span></td><td><span class="c">EM390D</span></td><td>34323</td><td>4234</td><td><span class="c">OFF</span></td><td class="k">---</td><td class="ts">2020/09/26 09:06:31</td><td>0</td><td>4</td><td>5555</td></tr>
<tr class="y"><td><span class="c">HP1</span></td><td><span class="c">EM390D</span></td><td>34323</td><td>4234</td><td><span class="c">OFF</span></td><td class="k">---</td><td class="ts">2020/09/26 09:08:16</td><td>43</td><td>4</td><td>5555</td></tr>
<tr><td><span class="c">HP1</span></td><td><span class="c">EM390D</span></td><td>34323</td><td>4234</td><td><span class="c">OFF</span></td><td class="k">---</td><td class="ts">2020/09/26 10:47:03</td><td>24</td><td>5</td><td>5555</td></tr>
<tr class="y"><td><span class="c">HP1</span></td><td><span class="c">EM390D</span></td><td>23423</td><td>2342</td><td><span class="c">OFF</span></td><td class="k">---</td><td class="ts">2020/09/26 11:45:37</td><td>5</td><td>5</td><td>3242</td></tr>
<tr><td><span class="c">HP1</span></td><td><span class="c">EM390D</span></td><td>123</td><td>123</td><td><span class="c">OFF</span></td><td class="k">---</td><td class="ts">2020/09/26 14:29:04</td><td>3</td><td>8</td><td>123</td></tr>
<tr class="y"><td><span class="c">HP1</span></td><td><span class="c">EM390D</span></td><td>23</td><td>23</td><td><span class="c">OFF</span></td><td class="k">---</td><td class="ts">2020/09/26 14:34:07</td><td>0</td><td>8</td><td>213</td></tr>
<tr><td><span class="c">HP1</span></td><td><span class="c">EM390D</span></td><td>456</td><td>789</td><td><span class="c">OFF</span></td><td class="k">---</td><td class="ts">2020/09/26 15:31:52</td><td>0</td><td>8</td><td>123</td></tr>
<tr class="y"><td><span class="c">HP1</span></td><td><span class="c">EM390D</span></td><td>456</td><td>789</td><td><span class="c">OFF</span></td><td class="k">---</td><td class="ts">2020/09/26 15:32:01</td><td>0</td><td>8</td><td>123</td></tr>
</table></div>
</body></html>
